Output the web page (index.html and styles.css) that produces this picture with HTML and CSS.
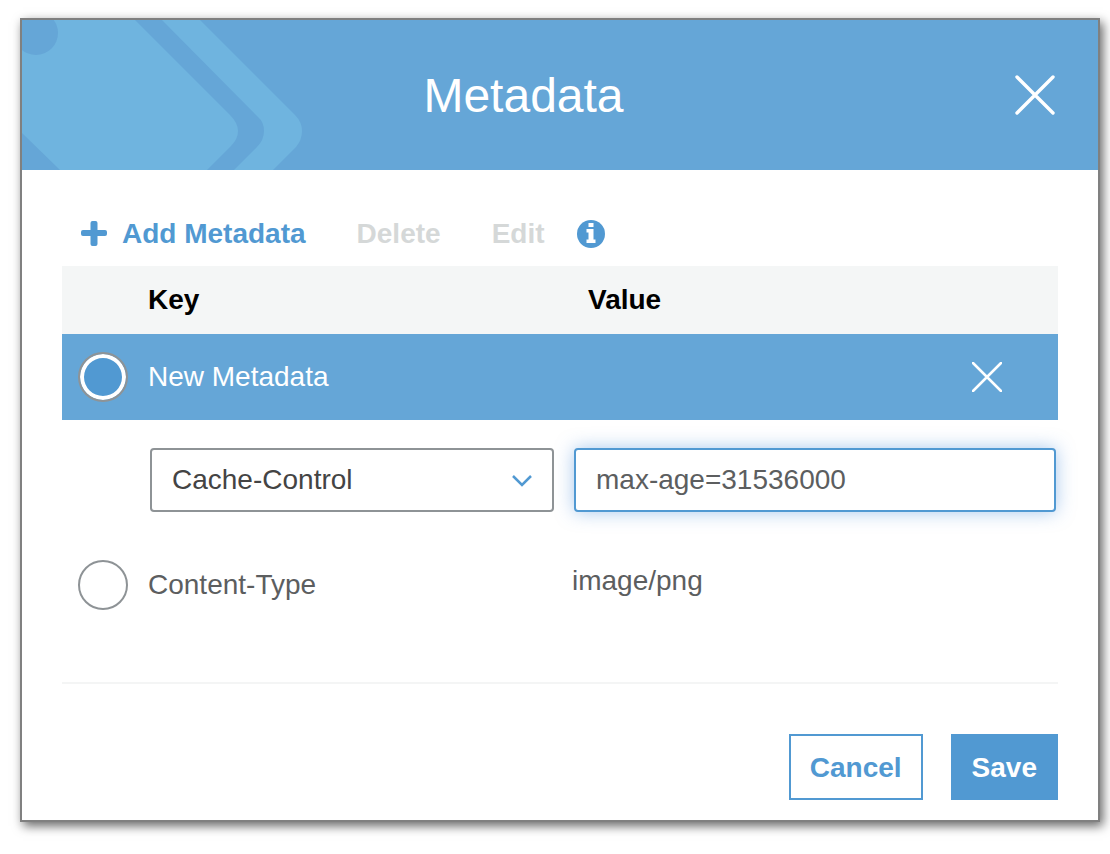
FILE: index.html
```html
<!DOCTYPE html>
<html lang="en">
    <head>
        <meta charset="UTF-8" />
        <meta name="viewport" content="width=device-width, initial-scale=1.0" />
        <title>Metadata</title>
        <link rel="stylesheet" href="styles.css">
    </head>
    <body>
        <form class="dialog" role="dialog" aria-labelledby="title">
            <header class="dialog-header">
                <svg class="header-art" width="280" height="150" viewBox="0 0 280 150" aria-hidden="true">
                    <path d="M0 0H113L208 95Q216 103 216 111Q216 119 209 126L185 150H38L0 113Z" />
                    <path d="M140 0H178L273 95Q280 102 280 111Q280 120 274 127L251 150H212L235 127Q242 120 242 111Q242 102 236 97Z" />
                    <circle cx="14" cy="13" r="22" />
                </svg>
                <h1 id="title">Metadata</h1>
                <button type="button" class="icon-button" aria-label="Close">
                    <svg width="40" height="40" viewBox="0 0 40 40">
                        <path d="M2 2L38 38M38 2L2 38" stroke-width="3.4" />
                    </svg>
                </button>
            </header>
            <div class="dialog-body">
                <div class="toolbar">
                    <button type="button" class="tool add">
                        <svg width="26" height="26" viewBox="0 0 26 26" aria-hidden="true">
                            <path d="M11.5 0h3q2 0 2 2v7H24q2 0 2 2v2q0 2-2 2h-7.500v8q0 2-2 2h-3q-2 0-2-2v-8H2q-2 0-2-2v-2q0-2 2-2h7.500V2q0-2 2-2z" />
                        </svg>
                        Add Metadata
                    </button>
                    <button type="button" class="tool" disabled>Delete</button>
                    <button type="button" class="tool" disabled>Edit</button>
                    <button type="button" class="tool info" aria-label="Information">
                        <svg width="28" height="28" viewBox="0 0 28 28">
                            <circle cx="14" cy="14" r="14" />
                            <path fill="#fff" d="M11.500 3h5v4h-5zM9.500 9h7v10.500h2V23h-9v-3.500h2v-7h-2z" />
                        </svg>
                    </button>
                </div>
                <table>
                    <colgroup>
                        <col class="col-pick">
                        <col class="col-key">
                        <col>
                    </colgroup>
                    <thead>
                        <tr>
                            <th></th>
                            <th>Key</th>
                            <th class="value-head">Value</th>
                        </tr>
                    </thead>
                    <tbody>
                        <tr class="selected">
                            <td><input type="radio" name="item" id="item-new" checked></td>
                            <td><label for="item-new">New Metadata</label></td>
                            <td class="remove">
                                <button type="button" class="icon-button" aria-label="Remove">
                                    <svg width="30" height="30" viewBox="0 0 30 30">
                                        <path d="M1 1L29 29M29 1L1 29" stroke-width="2.5" />
                                    </svg>
                                </button>
                            </td>
                        </tr>
                        <tr class="edit-row">
                            <td></td>
                            <td>
                                <div class="select-wrap">
                                    <select aria-label="Key">
                                        <option>Cache-Control</option>
                                    </select>
                                    <svg class="chevron" width="20" height="12" viewBox="0 0 20 12" aria-hidden="true">
                                        <path d="M1 1L10 10L19 1" />
                                    </svg>
                                </div>
                            </td>
                            <td class="value-edit">
                                <input type="text" class="value-input" aria-label="Value" value="max-age=31536000">
                            </td>
                        </tr>
                        <tr>
                            <td><input type="radio" name="item" id="item-type"></td>
                            <td><label for="item-type">Content-Type</label></td>
                            <td class="value">image/png</td>
                        </tr>
                    </tbody>
                </table>
                <footer>
                    <button type="button" class="btn">Cancel</button>
                    <button type="submit" class="btn primary">Save</button>
                </footer>
            </div>
        </form>
    </body>
</html>
```
FILE: styles.css
```css
* {
    box-sizing: border-box;
}
body {
    margin: 0;
    padding: 18px 10px 32px 20px;
    background: #fff;
    color: #5c5e5f;
    font-family: "Liberation Sans", Arial, sans-serif;
    font-size: 28px;
    line-height: 32px;
}
button,
input,
select {
    font: inherit;
}
button {
    padding: 0;
    border: 0;
    background: none;
    cursor: pointer;
}
svg {
    display: block;
}

.dialog {
    border: 2px solid #808080;
    background: #fff;
    box-shadow: 3px 4px 10px rgba(0, 0, 0, 0.6);
}
.dialog-header {
    position: relative;
    display: flex;
    align-items: center;
    height: 150px;
    padding: 0 43px 0 10px;
    background: #65a6d7;
    color: #fff;
}
.header-art {
    position: absolute;
    left: 0;
    top: 0;
    fill: #6fb4df;
}
.header-art circle {
    fill: #65a6d7;
}
#title {
    flex: 1;
    margin: 0;
    padding-top: 2px;
    font-size: 48px;
    font-weight: normal;
    line-height: 56px;
    text-align: center;
}
.icon-button svg {
    fill: none;
    stroke: #fff;
    stroke-linecap: round;
}
.dialog-body {
    padding: 32px 40px 20px;
}

.toolbar {
    display: flex;
    align-items: center;
    gap: 51px;
    height: 64px;
    padding-left: 19px;
}
.tool {
    color: #5199d2;
    font-weight: bold;
}
.tool svg {
    fill: #5199d2;
}
.tool:disabled {
    color: #d5d8d8;
}
.add {
    display: flex;
    align-items: center;
    gap: 15px;
}
.info {
    margin-left: -19px;
}

table {
    width: 100%;
    table-layout: fixed;
    border-collapse: collapse;
}
.col-pick {
    width: 86px;
}
.col-key {
    width: 424px;
}
th {
    height: 68px;
    padding: 0;
    background: #f4f6f6;
    color: #000;
    text-align: left;
}
.value-head {
    padding-left: 16px;
}
td {
    height: 86px;
    padding: 0;
}
.selected {
    background: #65a6d7;
    color: #fff;
}
.remove {
    padding-right: 56px;
    text-align: right;
}
.remove .icon-button {
    display: block;
    margin-left: auto;
}
.edit-row td {
    height: 122px;
    padding-bottom: 2px;
}
.value {
    padding-bottom: 8px;
}

input[type="radio"] {
    appearance: none;
    display: block;
    width: 50px;
    height: 50px;
    margin: 0 0 0 16px;
    border: 2px solid #8e9396;
    border-radius: 50%;
    background: #fff;
}
input[type="radio"]:checked {
    background: #5199d2;
    box-shadow: inset 0 0 0 4px #fff;
}
.select-wrap {
    position: relative;
    margin: 0 18px 0 2px;
}
select,
.value-input {
    appearance: none;
    display: block;
    width: 100%;
    height: 64px;
    padding: 0 20px;
    border: 2px solid #8e9396;
    border-radius: 4px;
    background: #fff;
    color: #444;
}
.chevron {
    position: absolute;
    right: 22px;
    top: 27px;
    fill: none;
    stroke: #5199d2;
    stroke-width: 2.5;
    pointer-events: none;
}
.value-edit {
    padding: 0 2px;
}
.value-input {
    border-color: #5199d2;
    color: #5c5e5f;
    outline: 0;
    box-shadow: 0 0 18px rgba(81, 145, 220, 0.5);
}

footer {
    display: flex;
    justify-content: flex-end;
    gap: 28px;
    margin-top: 54px;
    padding-top: 50px;
    border-top: 2px solid #f4f5f5;
}
.btn {
    height: 66px;
    padding: 2px 19px 0;
    border: 2px solid #5199d2;
    color: #5199d2;
    font-weight: bold;
}
.primary {
    background: #5199d2;
    color: #fff;
}
```
